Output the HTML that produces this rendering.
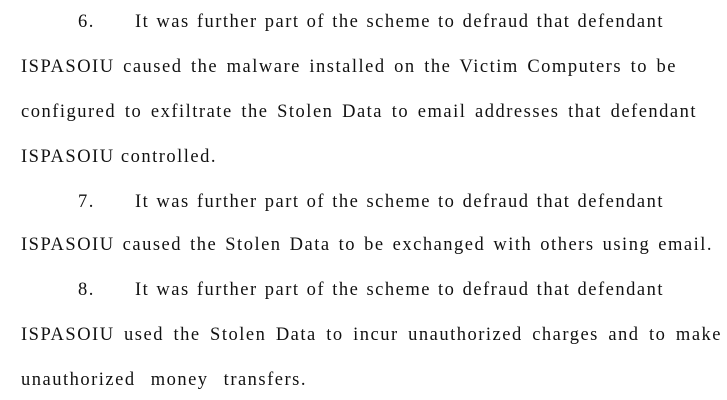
<!DOCTYPE html>
<html><head><meta charset="utf-8"><style>
html,body{margin:0;padding:0;background:#fff;}
body{width:727px;height:400px;position:relative;overflow:hidden;font-family:"Liberation Serif",serif;font-size:18.5px;color:#111;}
.l{position:absolute;white-space:nowrap;line-height:20px;text-align:justify;text-align-last:justify;letter-spacing:1.5px;}
.n{text-align:left;text-align-last:left;}
</style></head><body>
<div class="l n" style="left:78px;top:12px;">6.</div>
<div class="l" style="left:135px;top:12px;width:529px;">It was further part of the scheme to defraud that defendant</div>
<div class="l" style="left:21px;top:57px;width:656px;">ISPASOIU caused the malware installed on the Victim Computers to be</div>
<div class="l" style="left:21px;top:102px;width:676px;">configured to exfiltrate the Stolen Data to email addresses that defendant</div>
<div class="l" style="left:21px;top:147px;width:196px;">ISPASOIU controlled.</div>
<div class="l n" style="left:78px;top:192px;">7.</div>
<div class="l" style="left:135px;top:192px;width:529px;">It was further part of the scheme to defraud that defendant</div>
<div class="l" style="left:21px;top:235px;width:692px;">ISPASOIU caused the Stolen Data to be exchanged with others using email.</div>
<div class="l n" style="left:78px;top:280px;">8.</div>
<div class="l" style="left:135px;top:280px;width:529px;">It was further part of the scheme to defraud that defendant</div>
<div class="l" style="left:21px;top:325px;width:701px;">ISPASOIU used the Stolen Data to incur unauthorized charges and to make</div>
<div class="l" style="left:21px;top:370px;width:286px;">unauthorized money transfers.</div>
</body></html>
